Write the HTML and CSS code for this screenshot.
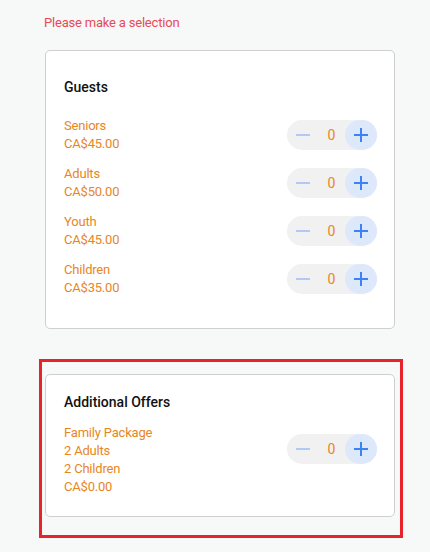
FILE: index.html
```html
<!DOCTYPE html>
<html>
<head>
<meta charset="utf-8">
<link rel="stylesheet" href="styles.css">
</head>
<body>
<main class="page">
  <p class="error">Please make a selection</p>

  <section class="card card-guests">
    <h2 class="card-title">Guests</h2>
    <div class="rows">
      <div class="row">
        <div class="info"><div>Seniors</div><div>CA$45.00</div></div>
        <div class="stepper">
          <button class="btn minus"><svg width="16" height="16" viewBox="0 0 16 16"><path d="M1 8h14" stroke="currentColor" stroke-width="2"/></svg></button>
          <span class="count">0</span>
          <button class="btn plus"><svg width="16" height="16" viewBox="0 0 16 16"><path d="M1 8h14M8 1v14" stroke="currentColor" stroke-width="2"/></svg></button>
        </div>
      </div>
      <div class="row">
        <div class="info"><div>Adults</div><div>CA$50.00</div></div>
        <div class="stepper">
          <button class="btn minus"><svg width="16" height="16" viewBox="0 0 16 16"><path d="M1 8h14" stroke="currentColor" stroke-width="2"/></svg></button>
          <span class="count">0</span>
          <button class="btn plus"><svg width="16" height="16" viewBox="0 0 16 16"><path d="M1 8h14M8 1v14" stroke="currentColor" stroke-width="2"/></svg></button>
        </div>
      </div>
      <div class="row">
        <div class="info"><div>Youth</div><div>CA$45.00</div></div>
        <div class="stepper">
          <button class="btn minus"><svg width="16" height="16" viewBox="0 0 16 16"><path d="M1 8h14" stroke="currentColor" stroke-width="2"/></svg></button>
          <span class="count">0</span>
          <button class="btn plus"><svg width="16" height="16" viewBox="0 0 16 16"><path d="M1 8h14M8 1v14" stroke="currentColor" stroke-width="2"/></svg></button>
        </div>
      </div>
      <div class="row">
        <div class="info"><div>Children</div><div>CA$35.00</div></div>
        <div class="stepper">
          <button class="btn minus"><svg width="16" height="16" viewBox="0 0 16 16"><path d="M1 8h14" stroke="currentColor" stroke-width="2"/></svg></button>
          <span class="count">0</span>
          <button class="btn plus"><svg width="16" height="16" viewBox="0 0 16 16"><path d="M1 8h14M8 1v14" stroke="currentColor" stroke-width="2"/></svg></button>
        </div>
      </div>
    </div>
  </section>

  <div class="highlight">
    <section class="card card-offers">
      <h2 class="card-title">Additional Offers</h2>
      <div class="row row-offer">
        <div class="info"><div>Family Package</div><div>2 Adults</div><div>2 Children</div><div>CA$0.00</div></div>
        <div class="stepper">
          <button class="btn minus"><svg width="16" height="16" viewBox="0 0 16 16"><path d="M1 8h14" stroke="currentColor" stroke-width="2"/></svg></button>
          <span class="count">0</span>
          <button class="btn plus"><svg width="16" height="16" viewBox="0 0 16 16"><path d="M1 8h14M8 1v14" stroke="currentColor" stroke-width="2"/></svg></button>
        </div>
      </div>
    </section>
  </div>
</main>
</body>
</html>
```
FILE: styles.css
```css
* { box-sizing: border-box; }
html, body { margin: 0; padding: 0; }
body {
  background: #f7f8f8;
  font-family: Roboto, "Noto Sans", Arial, sans-serif;
  font-size: 13px;
  line-height: 18px;
  letter-spacing: -0.2px;
}
.page {
  width: 350px;
  margin-left: 45px;
  padding-top: 14px;
}
.error {
  margin: 0 0 18px -1px;
  color: #e84a55;
  font-size: 13px;
  line-height: 18px;
}
.card {
  background: #fff;
  border: 1px solid #cfcfcf;
  border-radius: 5px;
}
.card-guests {
  padding: 26px 17px 31px 18px;
}
.card-title {
  margin: 0;
  font-size: 14px;
  line-height: 20px;
  font-weight: 500;
  color: #111;
  letter-spacing: 0;
}
.card-guests .card-title { margin-bottom: 20px; }
.rows {
  display: flex;
  flex-direction: column;
  gap: 12px;
}
.row {
  display: flex;
  justify-content: space-between;
  align-items: center;
}
.info {
  color: #e8861e;
}
.stepper {
  display: flex;
  align-items: center;
  width: 90px;
  height: 30px;
  border-radius: 15px;
  background: #f1f1f1;
}
.btn {
  border: 0;
  padding: 0;
  margin: 0;
  background: transparent;
  height: 30px;
  display: flex;
  align-items: center;
  justify-content: center;
}
.minus {
  width: 31px;
  color: #aecbf5;
}
.count {
  width: 27px;
  text-align: center;
  color: #e8861e;
  font-size: 14px;
  font-weight: 400;
  letter-spacing: 0;
}
.plus {
  width: 32px;
  border-radius: 15px;
  background: #dde9fb;
  color: #3a83f1;
}
.highlight {
  margin: 30px -8px 0 -6px;
  border: 3px solid #e8232b;
  padding: 12px 5px 18px 3px;
}
.card-offers {
  padding: 17px 17px 20px 18px;
}
.card-offers .card-title { margin-bottom: 12px; }
.row-offer { align-items: flex-start; }
.row-offer .stepper { margin-top: 10px; }
```
